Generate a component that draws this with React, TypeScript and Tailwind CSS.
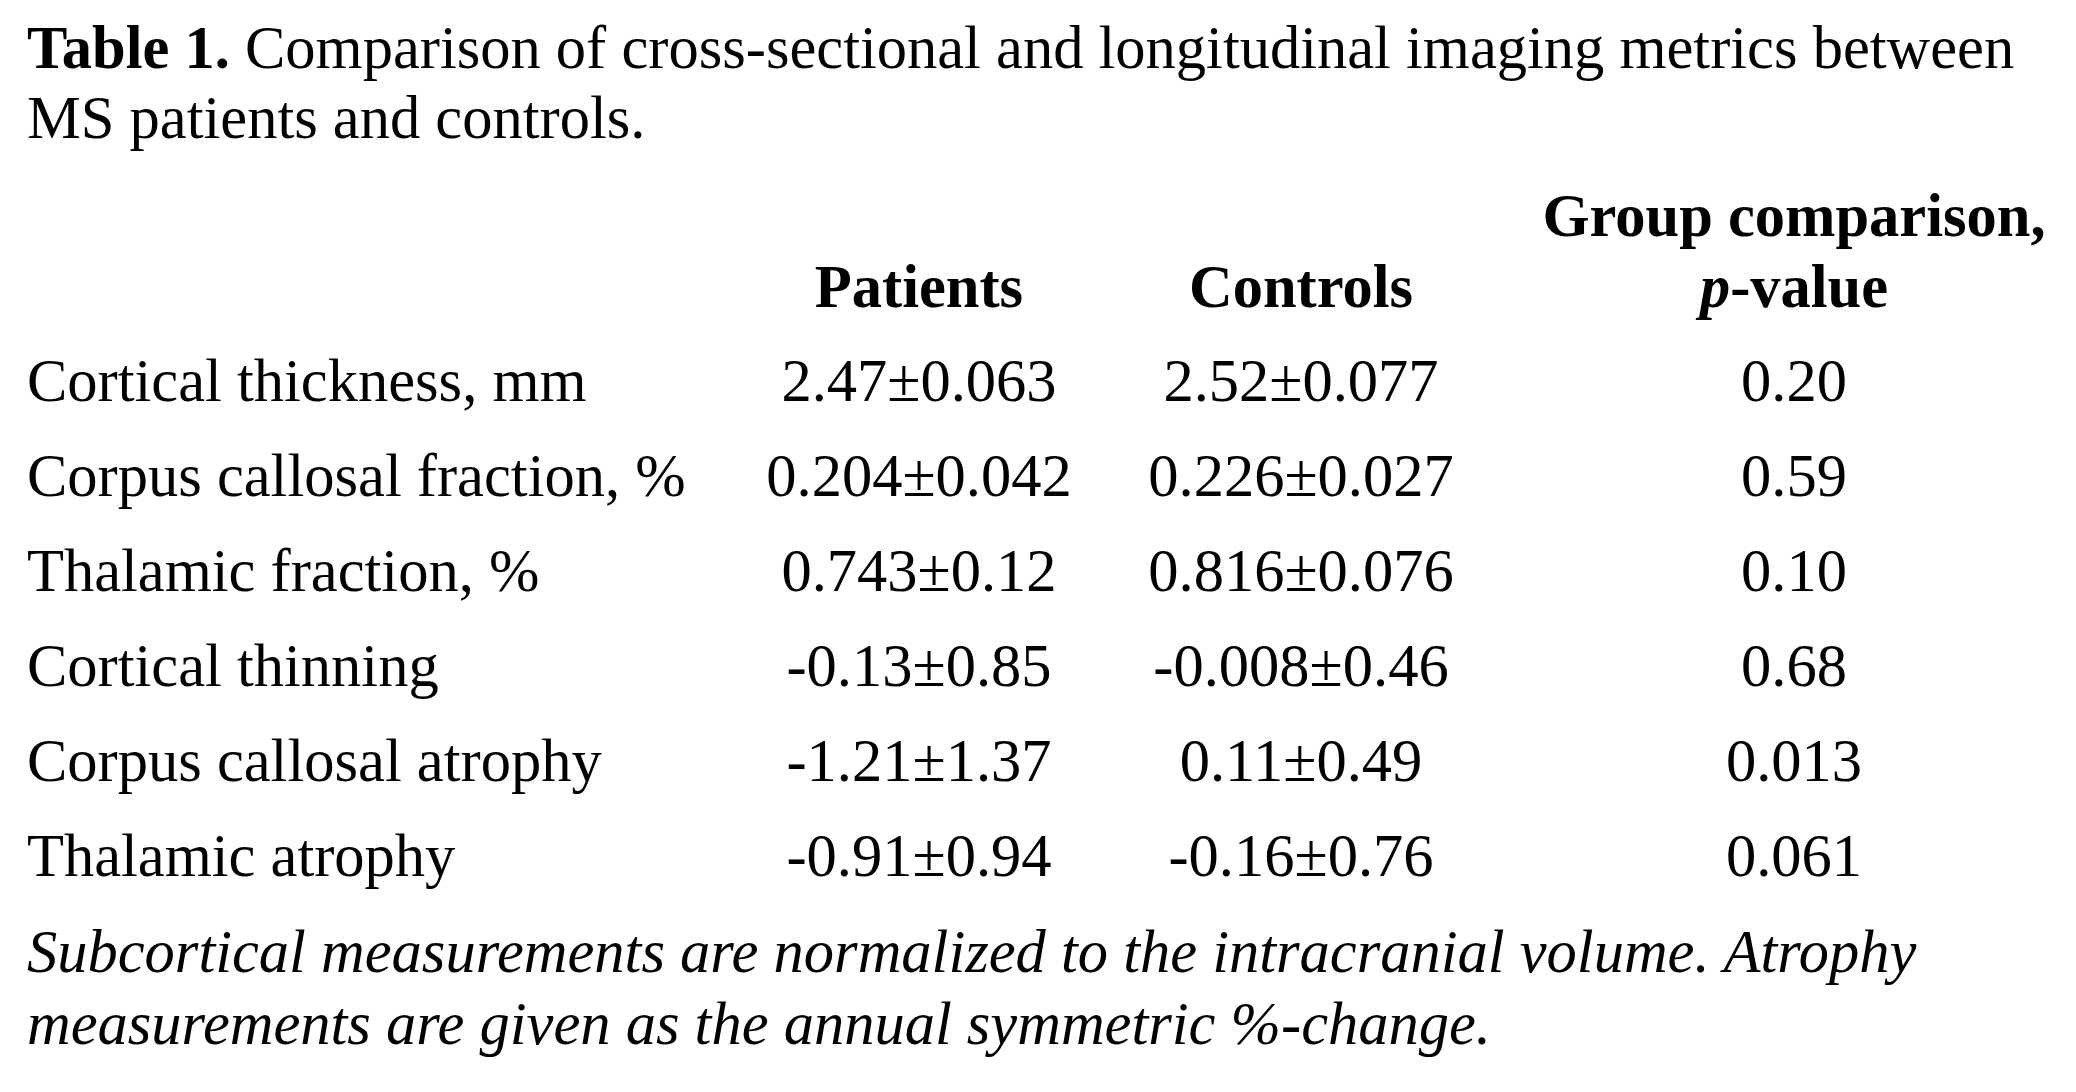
const rows: [string, string, string, string][] = [
  ['Cortical thickness, mm', '2.47±0.063', '2.52±0.077', '0.20'],
  ['Corpus callosal fraction, %', '0.204±0.042', '0.226±0.027', '0.59'],
  ['Thalamic fraction, %', '0.743±0.12', '0.816±0.076', '0.10'],
  ['Cortical thinning', '-0.13±0.85', '-0.008±0.46', '0.68'],
  ['Corpus callosal atrophy', '-1.21±1.37', '0.11±0.49', '0.013'],
  ['Thalamic atrophy', '-0.91±0.94', '-0.16±0.76', '0.061'],
]

export default function App() {
  return (
    <div className="min-h-[1092px] w-[2076px] bg-white pl-[27px] pt-[13px] text-[60.5px] text-black [font-family:'Liberation_Serif','Times_New_Roman',serif]">
      <p className="leading-[70px]">
        <span className="font-bold">Table 1.</span> Comparison of cross-sectional and longitudinal imaging metrics
        between MS patients and controls.
      </p>

      {/* header */}
      <div className="mt-[27px] grid grid-cols-[721px_342px_422px_564px] items-end font-bold leading-[71px]">
        <div />
        <div className="text-center">Patients</div>
        <div className="text-center">Controls</div>
        <div className="text-center">
          Group comparison,
          <br />
          <span className="italic">p</span>-value
        </div>
      </div>

      {/* body */}
      <div className="mt-[11px] flex flex-col">
        {rows.map(([label, pat, ctl, p]) => (
          <div key={label} className="grid grid-cols-[721px_342px_422px_564px] leading-[95px]">
            <div className="whitespace-nowrap">{label}</div>
            <div className="text-center whitespace-nowrap">{pat}</div>
            <div className="text-center whitespace-nowrap">{ctl}</div>
            <div className="text-center">{p}</div>
          </div>
        ))}
      </div>

      <p className="mt-[13px] italic leading-[72px]">
        Subcortical measurements are normalized to the intracranial volume. Atrophy measurements are given as the
        annual symmetric %-change.
      </p>
    </div>
  )
}
